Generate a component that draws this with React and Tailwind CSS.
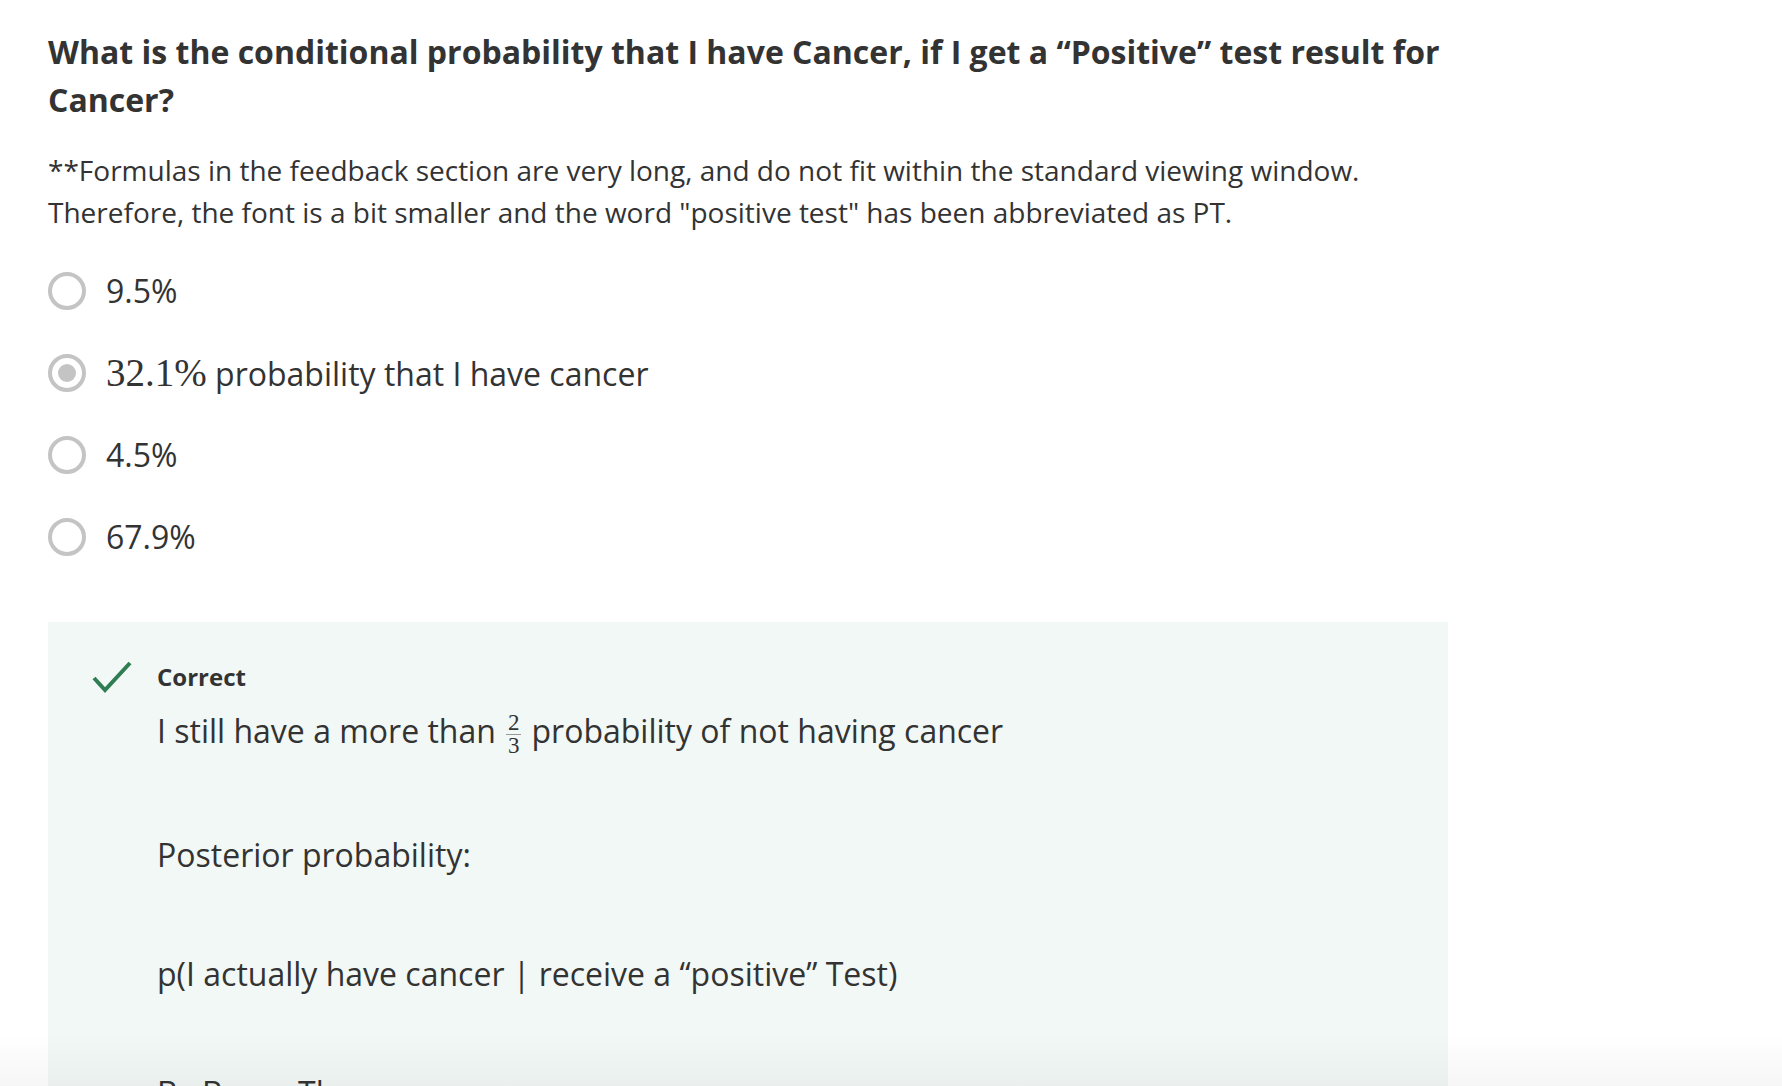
import React from "react";

function Radio({ selected }) {
  return (
    <div className="w-[38px] h-[38px] shrink-0 rounded-full border-[4px] border-[#c4c4c4] bg-white flex items-center justify-center">
      {selected && <div className="w-[18px] h-[18px] rounded-full bg-[#c4c4c4]" />}
    </div>
  );
}

function Option({ children, selected }) {
  return (
    <div className="h-[56px] flex items-center gap-[20px]">
      <Radio selected={selected} />
      <div className="text-[32px] leading-[42px] text-[#333333]">{children}</div>
    </div>
  );
}

export default function App() {
  return (
    <div
      className="relative min-h-screen h-[1086px] overflow-hidden bg-white text-[#333333]"
      style={{ fontFamily: '"Open Sans", "Noto Sans", sans-serif' }}
    >
      <div className="w-[1400px] ml-[48px] pt-[28px]">
        <h1 className="text-[32px] font-bold leading-[48px] text-[#333333]">
          What is the conditional probability that I have Cancer, if I get a “Positive” test result for Cancer?
        </h1>
        <p className="mt-[25px] text-[28px] leading-[42px] text-[#333333]">
          **Formulas in the feedback section are very long, and do not fit within the standard viewing window.
          <br />
          Therefore, the font is a bit smaller and the word "positive test" has been abbreviated as PT.
        </p>

        <div className="mt-[30px] flex flex-col gap-[26px]">
          <Option>9.5%</Option>
          <Option selected>
            <span
              className="text-[39px]"
              style={{ fontFamily: '"Liberation Serif", "DejaVu Serif", serif' }}
            >
              32.1%
            </span>{" "}
            probability that I have cancer
          </Option>
          <Option>4.5%</Option>
          <Option>67.9%</Option>
        </div>

        <div className="mt-[57px] bg-[#f2f8f5] pl-[44px] pt-[39px] pb-[80px]">
          <div className="flex items-center gap-[25px] h-[32px]">
            <svg width="40" height="32" viewBox="0 0 40 32" className="shrink-0">
              <path d="M2 17 L13 29 L38 2" fill="none" stroke="#2f7d52" strokeWidth="4" />
            </svg>
            <span className="text-[24px] font-bold leading-[32px]">Correct</span>
          </div>
          <div className="pl-[65px] text-[32px] leading-[42px]">
            <p className="mt-[17px]">
              I still have a more than{" "}
              <span
                className="inline-flex flex-col items-center align-middle mx-[2px] text-[23px] leading-[22px]"
                style={{ fontFamily: '"Liberation Serif", "DejaVu Serif", serif' }}
              >
                <span>2</span>
                <span className="block w-[15px] h-[1.5px] bg-[#999999]" />
                <span>3</span>
              </span>{" "}
              probability of not having cancer
            </p>
            <p className="mt-[77px]">Posterior probability:</p>
            <p className="mt-[77px]">p(I actually have cancer | receive a “positive” Test)</p>
            <p className="mt-[77px]">By Bayes Theorem:</p>
          </div>
        </div>
      </div>
      <div className="pointer-events-none absolute left-0 right-0 bottom-0 h-[52px] bg-gradient-to-b from-transparent to-[rgba(0,0,0,0.035)]" />
    </div>
  );
}
